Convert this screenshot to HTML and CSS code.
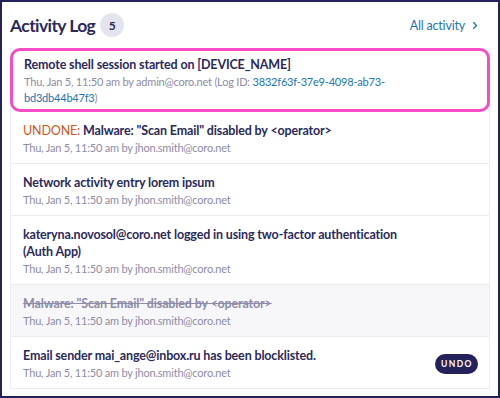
FILE: index.html
```html
<!DOCTYPE html>
<html lang="en">
<head>
  <meta charset="UTF-8" />
  <title>Activity Log</title>
  <link rel="stylesheet" href="styles.css">
</head>
<body>
  <div class="panel">
    <div class="header">
      <div class="heading">
        <h1>Activity Log</h1>
        <span class="count">5</span>
      </div>
      <a class="all-link" href="#">All activity
        <svg viewBox="0 0 6 10" width="6" height="9">
          <path d="M1.2 1.3 L4.6 5 L1.2 8.7" fill="none" stroke="#1f74b4" stroke-width="1.5"/>
        </svg>
      </a>
    </div>

    <div class="list">
      <div class="item active">
        <div class="title">Remote shell session started on [DEVICE_NAME]</div>
        <div class="meta">Thu, Jan 5, 11:50 am by admin@coro.net (Log ID: <a href="#">3832f63f-37e9-4098-ab73-bd3db44b47f3</a>)</div>
      </div>
      <div class="item">
        <div class="title"><span class="undone">UNDONE:</span> Malware: "Scan Email" disabled by &lt;operator&gt;</div>
        <div class="meta">Thu, Jan 5, 11:50 am by jhon.smith@coro.net</div>
      </div>
      <div class="item">
        <div class="title">Network activity entry lorem ipsum</div>
        <div class="meta">Thu, Jan 5, 11:50 am by jhon.smith@coro.net</div>
      </div>
      <div class="item">
        <div class="title">kateryna.novosol@coro.net logged in using two-factor authentication<br>(Auth App)</div>
        <div class="meta">Thu, Jan 5, 11:50 am by jhon.smith@coro.net</div>
      </div>
      <div class="item reverted">
        <div class="title">Malware: "Scan Email" disabled by &lt;operator&gt;</div>
        <div class="meta">Thu, Jan 5, 11:50 am by jhon.smith@coro.net</div>
      </div>
      <div class="item with-action">
        <div>
          <div class="title">Email sender mai_ange@inbox.ru has been blocklisted.</div>
          <div class="meta">Thu, Jan 5, 11:50 am by jhon.smith@coro.net</div>
        </div>
        <button class="undo">UNDO</button>
      </div>
    </div>
  </div>
</body>
</html>
```

FILE: styles.css
```css
body {
  margin: 0;
  font-family: Lato, "Open Sans", sans-serif;
  background: #fff;
}

.panel {
  width: 500px;
  height: 398px;
  box-sizing: border-box;
  border: 2px solid #25215a;
  padding: 0 8px;
  overflow: hidden;
}

.header {
  height: 46px;
  display: flex;
  align-items: center;
  justify-content: space-between;
  padding-left: 0;
  padding-right: 12px;
}

.heading {
  display: flex;
  align-items: center;
  gap: 5px;
}

h1 {
  margin: 0;
  font-size: 17.5px;
  font-weight: 700;
  letter-spacing: -0.6px;
  color: #2b2a5c;
}

.count {
  width: 24px;
  height: 24px;
  border-radius: 50%;
  background: #e4e4ee;
  color: #2b2a5c;
  font-size: 12px;
  font-weight: 700;
  display: flex;
  align-items: center;
  justify-content: center;
}

.all-link {
  color: #1f74b4;
  font-size: 12.5px;
  letter-spacing: -0.2px;
  text-decoration: none;
  display: flex;
  align-items: center;
  gap: 7px;
}

.list {
  border-left: 1px solid #ececf1;
  border-right: 1px solid #ececf1;
}

.item {
  padding: 10px 12px 7px 12px;
  border-bottom: 1px solid #ececf1;
}

.item.active {
  border: 3px solid #f64dc6;
  border-radius: 10px;
  padding: 5px 12px 3px 11px;
  margin: 0 -1px;
}

.title {
  font-size: 12.5px;
  font-weight: 700;
  letter-spacing: -0.15px;
  line-height: 17px;
  color: #2b2a5c;
}

.meta {
  max-width: 362px;
  margin-top: 1px;
  font-size: 11px;
  letter-spacing: -0.2px;
  line-height: 16px;
  color: #8e8ca8;
}

.meta a {
  color: #2276b6;
  text-decoration: none;
}

.undone {
  color: #d4561c;
  font-weight: 400;
}

.reverted {
  background: #f7f7f9;
}

.reverted .title {
  color: #8e8ca8;
  text-decoration: line-through;
}

.with-action {
  display: flex;
  align-items: center;
  justify-content: space-between;
}

.undo {
  background: #25215a;
  color: #fff;
  border: 0;
  border-radius: 10px;
  height: 20px;
  width: 43px;
  margin-right: -1px;
  font-family: inherit;
  font-size: 8.5px;
  font-weight: 700;
  letter-spacing: 1.4px;
  padding: 0 0 0 1px;
}
```
